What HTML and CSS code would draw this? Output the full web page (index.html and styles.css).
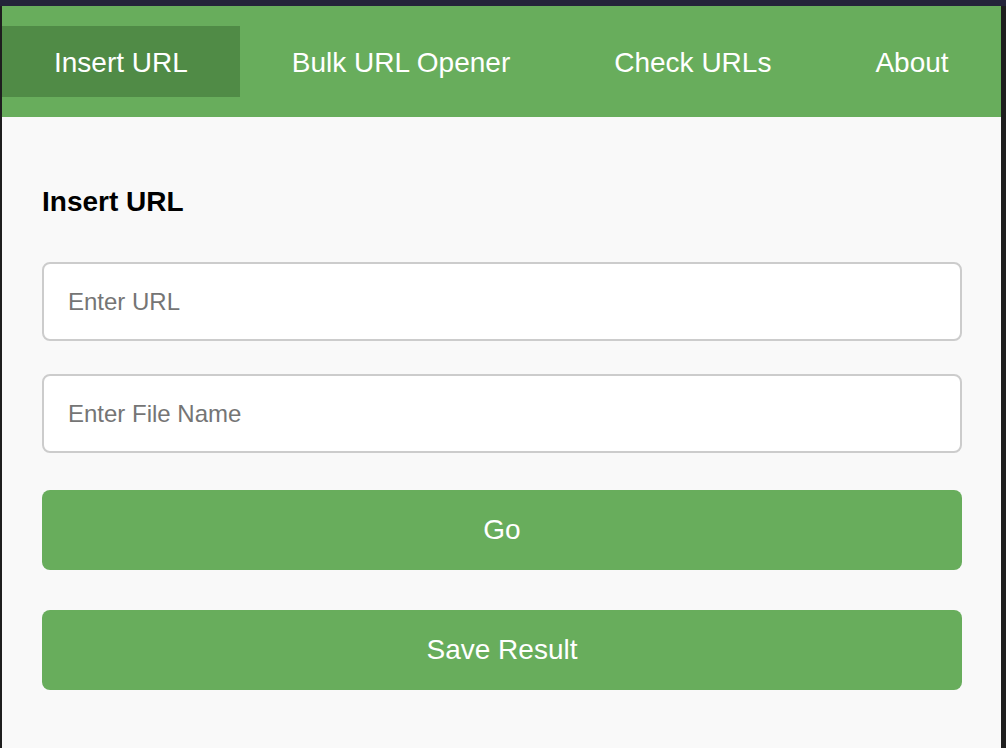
FILE: index.html
```html
<!DOCTYPE html>
<html lang="en">
<head>
<meta charset="utf-8">
<title>URL Tools</title>
<link rel="stylesheet" href="styles.css">
</head>
<body>
<div class="frame">
  <div class="app">
    <nav class="tabs">
      <a class="tab active">Insert URL</a>
      <a class="tab">Bulk URL Opener</a>
      <a class="tab">Check URLs</a>
      <a class="tab">About</a>
    </nav>
    <main class="content">
      <h2 class="title">Insert URL</h2>
      <input class="field" type="text" placeholder="Enter URL">
      <input class="field" type="text" placeholder="Enter File Name">
      <button class="btn btn-go">Go</button>
      <button class="btn btn-save">Save Result</button>
    </main>
  </div>
</div>
</body>
</html>
```

FILE: styles.css
```css
html, body {
  margin: 0;
  padding: 0;
  height: 100%;
}
body {
  background: #24243a;
  font-family: "Liberation Sans", Arial, sans-serif;
  overflow: hidden;
}
.frame {
  height: 100%;
  padding: 6px 5px 0 2px;
  box-sizing: border-box;
  background: linear-gradient(to bottom, #24243a 0, #24243a 6px, #1e1e1e 6px);
}
.app {
  height: 100%;
  display: flex;
  flex-direction: column;
  background: #f9f9f9;
}
.tabs {
  display: flex;
  background: #68ad5c;
  padding: 20px 0 20px 0;
}
.tab {
  color: #ffffff;
  font-size: 28px;
  line-height: 31px;
  padding: 21px 52px 19px 52px;
  white-space: nowrap;
}
.tab.active {
  background: #508b46;
}
.content {
  flex: 1;
  display: flex;
  flex-direction: column;
  padding: 69px 39px 0 40px;
}
.title {
  margin: 0 0 44px 0;
  font-size: 28px;
  line-height: 32px;
  font-weight: bold;
  color: #000;
}
.field {
  box-sizing: border-box;
  height: 79px;
  border: 2px solid #cccccc;
  border-radius: 8px;
  background: #ffffff;
  padding: 0 24px;
  font-family: "Liberation Sans", Arial, sans-serif;
  font-size: 24px;
  color: #333;
  margin: 0 0 33px 0;
  outline: none;
}
.field::placeholder {
  color: #757575;
}
.field + .field {
  margin-bottom: 37px;
}
.btn {
  height: 80px;
  border: none;
  border-radius: 8px;
  background: #68ad5c;
  color: #ffffff;
  font-family: "Liberation Sans", Arial, sans-serif;
  font-size: 28px;
  margin: 0;
  padding: 0;
}
.btn-go {
  margin-bottom: 40px;
}
```
